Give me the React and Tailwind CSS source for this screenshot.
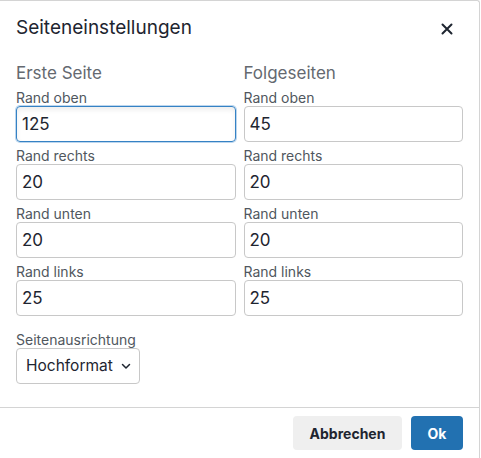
import React from 'react';

const Field = ({ label, value, focused }) => (
  <div className="flex flex-col">
    <label className="text-[14px] leading-[16px] text-[#50575e]">{label}</label>
    <input
      defaultValue={value}
      className={`h-[36px] w-full rounded-[4px] border px-[5px] text-[17px] text-[#1e2530] outline-none ${
        focused
          ? 'border-[#3582c4] shadow-[0_0_0_1px_#bcd6ee,inset_0_3px_5px_rgba(0,0,0,0.07)]'
          : 'border-[#c8c8c8]'
      }`}
    />
  </div>
);

const Column = ({ title, values, focusFirst }) => {
  const labels = ['Rand oben', 'Rand rechts', 'Rand unten', 'Rand links'];
  return (
    <div className="flex flex-col">
      <h3 className="text-[17px] leading-[22px] text-[#646970] mb-[6px]">{title}</h3>
      <div className="flex flex-col gap-[6px]">
        {labels.map((l, i) => (
          <Field key={l} label={l} value={values[i]} focused={focusFirst && i === 0} />
        ))}
      </div>
    </div>
  );
};

export default function App() {
  return (
    <div className="w-[480px] h-[458px] bg-white border-t border-r border-[#d4d4d4] rounded-tr-[3px] flex flex-col" style={{ fontFamily: 'Inter, "Liberation Sans", sans-serif' }}>
      {/* Header */}
      <div className="flex items-center justify-between h-[55px] pl-[16px] pr-[26px]">
        <h2 className="text-[19px] text-[#1e2530]">Seiteneinstellungen</h2>
        <button className="text-[#1e2530]">
          <svg width="12" height="12" viewBox="0 0 12 12" fill="none" stroke="currentColor" strokeWidth="2" strokeLinecap="round">
            <path d="M1.5 1.5l9 9M10.5 1.5l-9 9" />
          </svg>
        </button>
      </div>

      {/* Body */}
      <div className="px-[16px] pt-[6px] flex-1">
        <div className="grid grid-cols-2 gap-x-[8px]">
          <Column title="Erste Seite" values={['125', '20', '20', '25']} focusFirst />
          <Column title="Folgeseiten" values={['45', '20', '20', '25']} />
        </div>
        <div className="mt-[16px] flex flex-col">
          <label className="text-[14px] leading-[16px] text-[#50575e]">Seitenausrichtung</label>
          <button className="self-start h-[36px] w-[124px] flex items-center justify-between rounded-[4px] border border-[#c8c8c8] pl-[9px] pr-[8px] text-[15.5px] text-[#1e2530]">
            <span>Hochformat</span>
            <svg width="10" height="7" viewBox="0 0 10 7" fill="none" stroke="currentColor" strokeWidth="1.5" strokeLinecap="round" strokeLinejoin="round">
              <path d="M1.5 1.5l3.5 3.5 3.5-3.5" />
            </svg>
          </button>
        </div>
      </div>

      {/* Footer */}
      <div className="border-t border-[#d4d4d4] h-[51px] flex items-start justify-end gap-[9px] pr-[16px] pt-[8px]">
        <button className="h-[34px] w-[109px] rounded-[4px] bg-[#efefef] text-[14px] font-bold text-[#1e2530]">Abbrechen</button>
        <button className="h-[34px] w-[52px] rounded-[4px] bg-[#2271b1] text-[14px] font-bold text-white">Ok</button>
      </div>
    </div>
  );
}
